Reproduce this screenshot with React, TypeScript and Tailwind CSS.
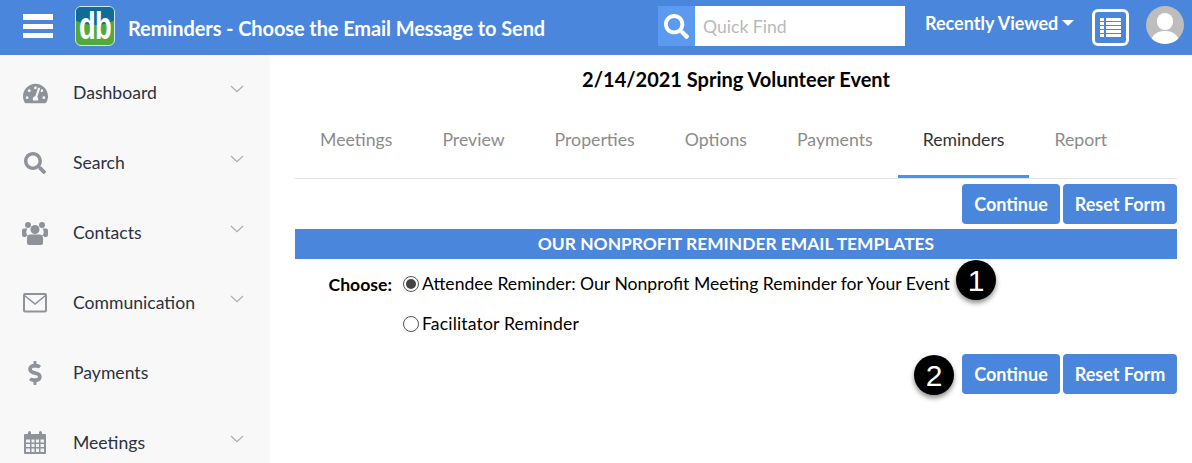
import { FaTachometerAlt, FaSearch, FaDollarSign } from "react-icons/fa";
import type { ReactNode } from "react";

const Chevron = () => (
  <svg width="14" height="8" viewBox="0 0 14 8" fill="none" className="stroke-[#a9adb3]">
    <path d="M1 1l6 5.6L13 1" strokeWidth="1.2" />
  </svg>
);

const CalendarIcon = () => (
  <svg width="24" height="24" viewBox="0 0 24 24" className="fill-[#8e9299]">
    <path d="M2 3h3V1.5a1.5 1.5 0 0 1 3 0V3h8V1.5a1.5 1.5 0 0 1 3 0V3h3a1 1 0 0 1 1 1v18a1 1 0 0 1-1 1H2a1 1 0 0 1-1-1V4a1 1 0 0 1 1-1z" />
    <path
      d="M3 8.5h4v3H3zM8.5 8.5h3v3h-3zM13 8.5h3v3h-3zM17.5 8.5H21v3h-3.5zM3 13h4v3H3zM8.5 13h3v3h-3zM13 13h3v3h-3zM17.5 13H21v3h-3.5zM3 17.5h4V21H3zM8.5 17.5h3V21h-3zM13 17.5h3V21h-3zM17.5 17.5H21V21h-3.5z"
      className="fill-[#f2f2f2]"
    />
  </svg>
);

const PeopleIcon = () => (
  <svg width="26" height="24" viewBox="0 0 26 24" className="fill-[#8e9299]">
    <circle cx="6" cy="4" r="3" />
    <circle cx="20" cy="4" r="3" />
    <path d="M0 9.5a2 2 0 0 1 2-2h3.5A6 6 0 0 0 6 15H4v1H2a2 2 0 0 1-2-2zM26 9.5a2 2 0 0 0-2-2h-3.5A6 6 0 0 1 20 15h2v1h2a2 2 0 0 0 2-2z" />
    <circle cx="13" cy="8.5" r="4.5" />
    <path d="M5 17a3.5 3.5 0 0 1 3.5-3.5h9A3.5 3.5 0 0 1 21 17v5a2 2 0 0 1-2 2H7a2 2 0 0 1-2-2z" />
  </svg>
);

const EnvelopeIcon = () => (
  <svg width="24" height="20" viewBox="0 0 24 20" fill="none" className="stroke-[#8e9299]">
    <rect x="1" y="1" width="22" height="17.5" rx="1" strokeWidth="2" />
    <path d="M1.5 2.5L12 11l10.5-8.5" strokeWidth="1.6" />
  </svg>
);

type NavItem = { label: string; icon: ReactNode; sub?: boolean };

const NAV: NavItem[] = [
  { label: "Dashboard", icon: <FaTachometerAlt className="text-[#8e9299] text-[25px]" />, sub: true },
  { label: "Search", icon: <FaSearch className="text-[#8e9299] text-[22px]" />, sub: true },
  { label: "Contacts", icon: <PeopleIcon />, sub: true },
  { label: "Communication", icon: <EnvelopeIcon />, sub: true },
  { label: "Payments", icon: <FaDollarSign className="text-[#8e9299] text-[24px]" /> },
  { label: "Meetings", icon: <CalendarIcon />, sub: true },
];

const TABS = ["Meetings", "Preview", "Properties", "Options", "Payments", "Reminders", "Report"];

const Actions = () => (
  <div className="flex justify-end gap-[3px]">
    <button className="h-10 w-[98px] rounded-[4px] bg-[#4a86dc] text-[18px] font-bold text-white">Continue</button>
    <button className="h-10 w-[114px] rounded-[4px] bg-[#4a86dc] text-[18px] font-bold text-white">Reset Form</button>
  </div>
);

const Badge = ({ n, className }: { n: string; className: string }) => (
  <div
    className={`absolute flex h-10 w-10 items-center justify-center rounded-full bg-black text-[30px] text-white shadow-[0_3px_5px_rgba(0,0,0,0.45)] font-['Liberation_Sans',sans-serif] ${className}`}
  >
    {n}
  </div>
);

const Radio = ({ checked }: { checked?: boolean }) => (
  <span className="flex h-4 w-4 shrink-0 items-center justify-center rounded-full border border-[#555] bg-white">
    {checked && <span className="h-[10px] w-[10px] rounded-full bg-[#444]" />}
  </span>
);

export default function App() {
  return (
    <div className="h-[463px] w-[1192px] overflow-hidden bg-white font-['Lato',sans-serif]">
      {/* Top bar */}
      <header className="flex h-[55px] items-start bg-[#4a86dc] text-white">
        <div className="ml-[23px] mt-[14px] flex w-[30px] flex-col gap-[4px]">
          <span className="h-[6px] bg-white" />
          <span className="h-[5px] bg-white" />
          <span className="h-[5px] bg-white" />
        </div>
        <div className="relative ml-[22px] mt-[6px] h-10 w-10 overflow-hidden rounded-[6px] border border-[#d8e4ee] bg-[#55a93c]">
          <div className="absolute left-[-6px] right-[-6px] top-[-8px] h-[26px] rounded-b-[50%] bg-[#0f6c98]" />
          <span className="absolute inset-0 flex scale-x-[0.72] items-center justify-center text-[38px] font-bold leading-none tracking-[-1px] text-white font-['Liberation_Sans',sans-serif]">
            db
          </span>
        </div>
        <h1 className="ml-[13px] mt-[13px] w-[530px] whitespace-nowrap text-[20px] font-bold leading-[30px] tracking-[-0.1px]">
          Reminders - Choose the Email Message to Send
        </h1>
        <div className="mt-[6px] flex h-10 w-[37px] items-center justify-center bg-[#5b9aee]">
          <FaSearch className="text-[25px]" />
        </div>
        <div className="mt-[6px] flex h-10 w-[210px] items-center bg-white pl-2 pt-[2px] text-[17.6px] text-[#b9b9b9]">
          Quick Find
        </div>
        <div className="ml-5 mt-[8px] flex items-center gap-[4px] text-[18px] font-bold leading-[30px]">
          Recently Viewed
          <span className="h-0 w-0 border-x-[6px] border-t-[6px] border-x-transparent border-t-white" />
        </div>
        <div className="ml-[18px] mt-[9px] flex h-[37px] w-[37px] flex-col justify-center gap-[1px] rounded-[6px] border-[3px] border-white px-[5px]">
          {[0, 1, 2, 3, 4].map((i) => (
            <div key={i} className="flex gap-[2px]">
              <span className="h-[3px] w-[4px] bg-white" />
              <span className="h-[3px] flex-1 bg-white" />
            </div>
          ))}
        </div>
        <div className="relative ml-[17px] mt-[6px] h-[38px] w-[38px] overflow-hidden rounded-full bg-[#bdbdbd]">
          <span className="absolute left-[11px] top-[7px] h-[17px] w-[16px] rounded-full bg-white" />
          <span className="absolute left-[4px] top-[25px] h-[20px] w-[30px] rounded-t-[14px] bg-white" />
        </div>
      </header>

      <div className="flex h-[408px]">
        {/* Sidebar */}
        <aside className="h-full w-[270px] shrink-0 bg-[#f8f8f8] pt-[3px]">
          {NAV.map((item) => (
            <div key={item.label} className="flex h-[70px] items-center">
              <span className="flex w-[73px] shrink-0 justify-center pr-[3px]">{item.icon}</span>
              <span className="flex-1 text-[17.6px] text-[#2b3240]">{item.label}</span>
              {item.sub && (
                <span className="mb-[8px] mr-[26px]">
                  <Chevron />
                </span>
              )}
            </div>
          ))}
        </aside>

        {/* Main */}
        <main className="relative flex-1 pl-[25px] pr-[15px] text-black">
          <h2 className="mt-[9px] text-center text-[20px] font-bold leading-[30px]">2/14/2021 Spring Volunteer Event</h2>
          <nav className="mt-[16px] flex h-[69px] border-b border-[#e3e3e3]">
            {TABS.map((t) => (
              <div
                key={t}
                className={
                  t === "Reminders"
                    ? "border-b-[3px] border-[#4a94e8] px-[25px] pt-[17px] text-[17.7px] leading-[26px] text-[#333]"
                    : "px-[25px] pt-[17px] text-[17.7px] leading-[26px] text-[#8c8c8c]"
                }
              >
                {t}
              </div>
            ))}
          </nav>
          <div className="mt-[5px]">
            <Actions />
          </div>
          <div className="mt-[5px] h-[30px] bg-[#4a86dc] text-center text-[17.4px] font-bold leading-[30px] text-white">
            OUR NONPROFIT REMINDER EMAIL TEMPLATES
          </div>
          <div className="mt-[10px] flex text-[17.6px] leading-[30px]">
            <span className="mt-px w-[97px] text-right font-bold">Choose:</span>
            <div className="ml-[11px] flex flex-col gap-[10px]">
              <label className="flex items-center gap-[3px]">
                <Radio checked />
                Attendee Reminder: Our Nonprofit Meeting Reminder for Your Event
              </label>
              <label className="flex items-center gap-[3px] tracking-[0.15px]">
                <Radio />
                Facilitator Reminder
              </label>
            </div>
          </div>
          <div className="mt-[15px]">
            <Actions />
          </div>
          <Badge n="1" className="left-[686px] top-[205px]" />
          <Badge n="2" className="left-[644px] top-[300px]" />
        </main>
      </div>
    </div>
  );
}
